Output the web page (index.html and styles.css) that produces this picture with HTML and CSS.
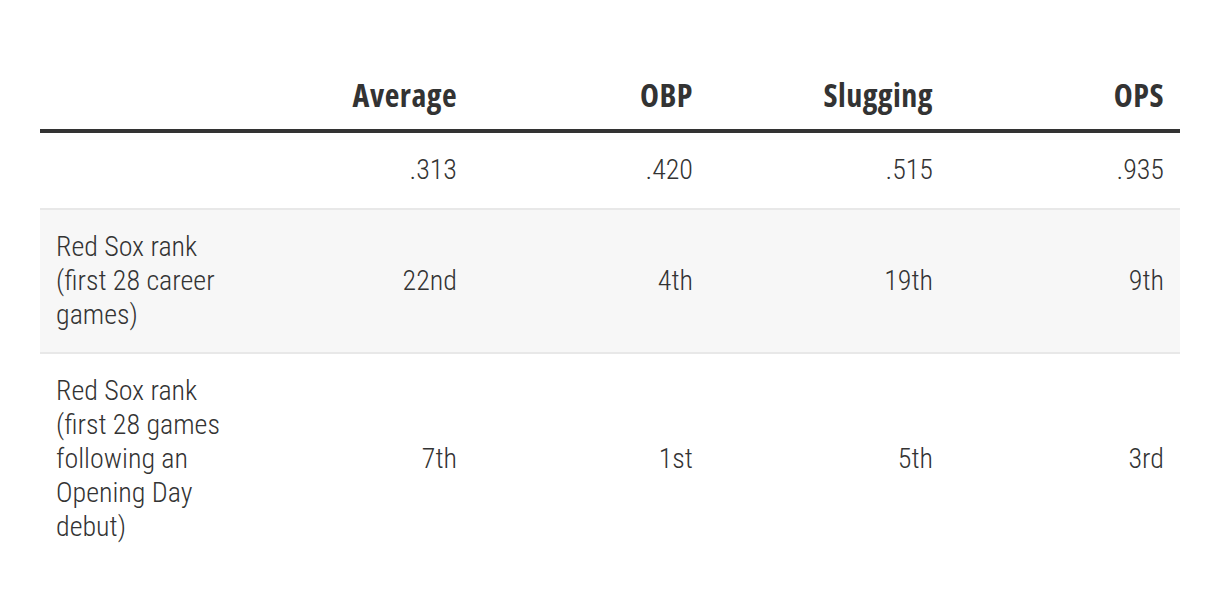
FILE: index.html
```html
<!DOCTYPE html>
<html lang="en">
<head>
<meta charset="utf-8">
<title>Red Sox rank</title>
<link rel="stylesheet" href="styles.css">
</head>
<body>
<div class="wrap">
  <table class="stats">
    <colgroup>
      <col class="c-label">
      <col class="c-avg">
      <col class="c-obp">
      <col class="c-slg">
      <col class="c-ops">
    </colgroup>
    <thead>
      <tr>
        <th class="label"></th>
        <th>Average</th>
        <th>OBP</th>
        <th>Slugging</th>
        <th>OPS</th>
      </tr>
    </thead>
    <tbody>
      <tr>
        <td class="label"></td>
        <td>.313</td>
        <td>.420</td>
        <td>.515</td>
        <td>.935</td>
      </tr>
      <tr class="alt">
        <td class="label">Red Sox rank (first 28 career games)</td>
        <td>22nd</td>
        <td>4th</td>
        <td>19th</td>
        <td>9th</td>
      </tr>
      <tr>
        <td class="label">Red Sox rank (first 28 games following an Opening Day debut)</td>
        <td>7th</td>
        <td>1st</td>
        <td>5th</td>
        <td>3rd</td>
      </tr>
    </tbody>
  </table>
</div>
</body>
</html>
```

FILE: styles.css
```css
html, body {
  margin: 0;
  padding: 0;
  background: #ffffff;
}

body {
  font-family: "Open Sans", "DejaVu Sans", sans-serif;
  color: #333333;
}

.wrap {
  padding: 55px 40px 0 40px;
}

.stats {
  width: 1140px;
  table-layout: fixed;
  border-collapse: collapse;
}

.c-label {
  width: 197px;
}

.c-avg {
  width: 236px;
}

.c-obp {
  width: 236px;
}

.c-slg {
  width: 240px;
}

.c-ops {
  width: 231px;
}

.stats th {
  font-family: "Open Sans", "DejaVu Sans", sans-serif;
  font-size: 32px;
  font-weight: 700;
  font-stretch: 75%;
  letter-spacing: 0.5px;
  line-height: 40px;
  text-align: right;
  padding: 20px 16px 14px 16px;
  border-bottom: 4px solid #333333;
  color: #333333;
}

.stats td {
  font-family: Roboto, "Open Sans", sans-serif;
  font-size: 28px;
  font-weight: 300;
  font-stretch: 75%;
  line-height: 34px;
  text-align: right;
  vertical-align: middle;
  padding: 20px 16px 20px 16px;
  border-bottom: 2px solid #e8e8e8;
  color: #333333;
}

.stats tbody tr:first-child td {
  padding-bottom: 21px;
}

.stats tbody tr:last-child td {
  border-bottom: none;
}

.stats td.label,
.stats th.label {
  text-align: left;
}

.stats tr.alt td {
  background: #f7f7f7;
}
```
